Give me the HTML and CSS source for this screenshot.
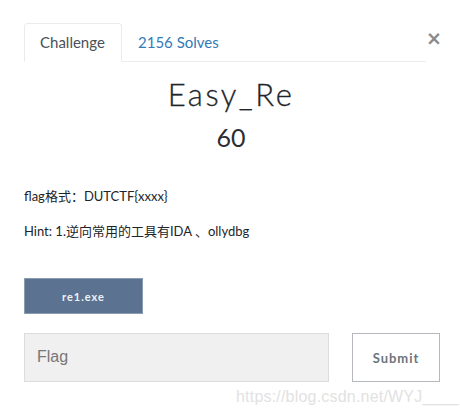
FILE: index.html
```html
<!DOCTYPE html>
<html>
<head>
<meta charset="utf-8">
<link rel="stylesheet" href="styles.css">
</head>
<body>
<div class="modal">
  <div class="header">
    <ul class="tabs">
      <li class="tab active">Challenge</li>
      <li class="tab link">2156 Solves</li>
    </ul>
    <span class="close">&times;</span>
  </div>
  <h1 class="title">Easy_Re</h1>
  <div class="points">60</div>
  <p class="desc">flag格式：DUTCTF{xxxx}</p>
  <p class="desc hint">Hint: 1.逆向常用的工具有IDA 、ollydbg</p>
  <a class="file">re1.exe</a>
  <div class="submit-row">
    <div class="flag-input">Flag</div>
    <div class="submit">Submit</div>
  </div>
  <div class="watermark">https://blog.csdn.net/WYJ____</div>
</div>
</body>
</html>
```
FILE: styles.css
```css
* { box-sizing: border-box; }
body {
  margin: 0;
  background: #fff;
  font-family: Lato, "Noto Sans CJK SC", sans-serif;
  color: #212529;
}
.modal {
  padding: 23px 0 0 24px;
  width: 460px;
}
.header {
  display: flex;
  align-items: flex-start;
}
.tabs {
  list-style: none;
  margin: 0;
  padding: 0;
  display: flex;
  width: 402px;
  border-bottom: 1px solid #e9ecef;
}
.tab {
  font-size: 15px;
  line-height: 21px;
  padding: 8px 16px 8px 15px;
  margin-bottom: -1px;
  border: 1px solid transparent;
  border-radius: 4px 4px 0 0;
}
.tab.active {
  color: #495057;
  border-color: #e9ecef #e9ecef #fff;
  background: #fff;
  width: 98px;
}
.tab.link { color: #337ab7; }
.close {
  font-size: 19px;
  line-height: 20px;
  font-weight: 700;
  color: #8a8a8a;
  margin: 5px 0 0 0;
  font-family: "DejaVu Sans", sans-serif;
}
.title {
  margin: 16px 0 0 0;
  width: 414px;
  text-align: center;
  font-weight: 300;
  font-size: 31px;
  line-height: 33px;
  letter-spacing: 2.5px;
  color: #212529;
  -webkit-text-stroke: 0.3px #212529;
}
.points {
  margin-top: 11px;
  width: 414px;
  text-align: center;
  font-size: 25px;
  font-weight: 400;
  line-height: 30px;
  color: #2a2e33;
}
.desc {
  margin: 34px 0 0 0;
  font-size: 13px;
  line-height: 20px;
  color: #212529;
}
.desc.hint { margin-top: 15px; }
.file {
  display: flex;
  align-items: center;
  justify-content: center;
  margin-top: 37px;
  width: 119px;
  height: 36px;
  background: #5b7290;
  border: 1px solid #8a9cb2;
  color: #eef2f6;
  font-size: 11px;
  font-weight: 700;
  letter-spacing: 1px;
}
.submit-row {
  display: flex;
  align-items: flex-start;
  margin-top: 19px;
}
.flag-input {
  width: 305px;
  height: 49px;
  background: #f0f0f0;
  border: 1px solid #dcdcdc;
  font-family: "Liberation Sans", Arial, sans-serif;
  font-size: 16px;
  color: #777;
  padding: 14px 0 0 12px;
}
.submit {
  margin-left: 23px;
  width: 88px;
  height: 49px;
  border: 1px solid #b5b8bd;
  background: #fff;
  display: flex;
  align-items: center;
  justify-content: center;
  font-size: 13px;
  font-weight: 700;
  letter-spacing: 1px;
  color: #6c757d;
}
.watermark {
  margin: 6px 0 0 212px;
  font-family: "Liberation Sans", Arial, sans-serif;
  font-size: 16px;
  line-height: 18px;
  color: #e2e2e2;
  letter-spacing: 0.2px;
}
```
